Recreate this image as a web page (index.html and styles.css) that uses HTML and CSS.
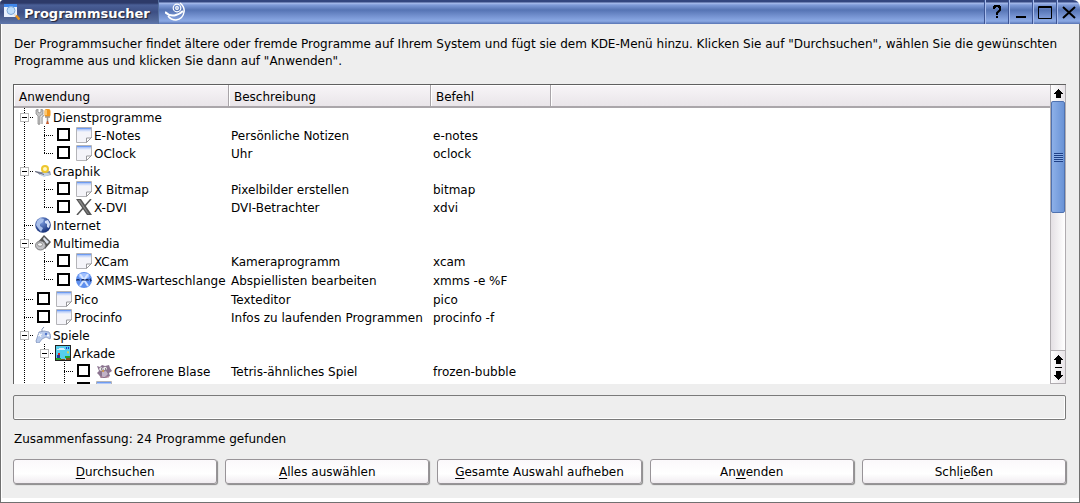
FILE: index.html
```html
<!DOCTYPE html>
<html lang="de">
<head>
    <meta charset="UTF-8">
    <title>Programmsucher</title>
    <link rel="stylesheet" href="styles.css">
</head>
<body>
    <!-- shared icons -->
    <svg class="sprites" aria-hidden="true">
        <defs>
            <linearGradient id="gDoc" x1="0" y1="0" x2="0" y2="1">
                <stop offset="0" stop-color="#4d86f0"/>
                <stop offset=".4" stop-color="#b9cdf8"/>
                <stop offset="1" stop-color="#f4f5fb"/>
            </linearGradient>
            <radialGradient id="gGlobe" cx=".4" cy=".3" r=".7">
                <stop offset="0" stop-color="#7d9de0"/>
                <stop offset="1" stop-color="#152f78"/>
            </radialGradient>
        </defs>
        <symbol id="doc" viewBox="0 0 16 16">
            <path d="M.5 .5h15v10l-5 5H.5z" fill="#f4f4f9" stroke="#b4b4b8"/>
            <path d="M1 1h14v4H1z" fill="url(#gDoc)"/>
            <path d="M15.5 10.500l-5 5v-4.500h4.500z" fill="#fff" stroke="#98989c"/>
        </symbol>
        <symbol id="tools" viewBox="0 0 16 16">
            <path d="M1 1v4l2 2v8q1 1 2 0V7l3-2V1L6 0v3L4 4 3 3V0z" fill="#c4c4c4" stroke="#808080" stroke-width=".7"/>
            <path d="M7 8v7M7 8l2-2" stroke="#aaa" stroke-width="1.500"/>
            <rect x="9.500" y="0" width="6" height="8" rx="2" fill="#f39a1e"/>
            <path d="M11 1v5" stroke="#ffd68a" stroke-width="1.500"/>
            <path d="M10 8h5M12.500 8v7" stroke="#a49a90" stroke-width="1.500"/>
            <path d="M12 12l-1 3h3l-1-3z" fill="#c65c30"/>
        </symbol>
        <symbol id="graphics" viewBox="0 0 16 16">
            <path d="M0 8l6 1 9-1 1 4-6 1-5-1z" fill="#8793a8"/>
            <path d="M4 11q6-3 12 0l-7 3z" fill="#c3d2e6"/>
            <circle cx="10" cy="6" r="4" fill="#edc62e"/>
            <circle cx="10" cy="6" r="2" fill="#fff8c0"/>
            <path d="M0 8.500l9 3" stroke="#667" stroke-width="1"/>
        </symbol>
        <symbol id="xdvi" viewBox="0 0 16 16">
            <path d="M0 0h5l11 16h-5z" fill="#555"/>
            <path d="M15 0L1 16" stroke="#555" stroke-width="1.500"/>
            <path d="M2 1h2l9 14h-1z" fill="#888"/>
        </symbol>
        <symbol id="globe" viewBox="0 0 16 16">
            <circle cx="8" cy="8" r="7.800" fill="url(#gGlobe)"/>
            <path d="M2 4l3-3 4 1-1 3-3 2v2l3 2-2 4-3-4-2-3z" fill="#a9bfea"/>
            <path d="M10 4l3-1 2 4-1 4-2-1v-3l-2-1z" fill="#d5e0f8"/>
        </symbol>
        <symbol id="media" viewBox="0 0 16 16">
            <path d="M9 0l7 7-6 7-7-7z" fill="#555"/>
            <path d="M9 2l5 5-2 2-4-5z" fill="#dde3ee"/>
            <path d="M6 6l5 5-1 1-5-5z" fill="#c8ccd8"/>
            <ellipse cx="5.500" cy="10.500" rx="5" ry="4.500" fill="#c4c4c8" stroke="#666" stroke-width=".8"/>
            <ellipse cx="5" cy="9.500" rx="2.500" ry="1.800" fill="#f4f4f4" stroke="#777" stroke-width=".7"/>
        </symbol>
        <symbol id="xmms" viewBox="0 0 16 16">
            <circle cx="8" cy="8" r="8" fill="#5e8fee"/>
            <ellipse cx="8" cy="4" rx="5.500" ry="3" fill="#a0c0ff"/>
            <path d="M4 2l8 12M12 2L4 14" stroke="#d8e6ff" stroke-width="2"/>
            <path d="M1 9V7l1 1 1-1v2M6 9V7l1 1 1-1v2M10 9V7l1 1 1-1v2M15 7h-1v1h1v1h-1" fill="none" stroke="#142c68"/>
        </symbol>
        <symbol id="games" viewBox="0 0 16 16">
            <path d="M7 5Q6 2 9 0" fill="none" stroke="#7d8fb8"/>
            <path d="M4 5l5-1 5 1q3 4 1 7l-4-2-4 2-3 4q-3 1-3-2z" fill="#b9cbec" stroke="#8294bc" stroke-width=".8"/>
            <path d="M3 9l4-2M4 6l2 4" stroke="#fff"/>
            <circle cx="11" cy="7" r="1.200" fill="#4f74c8"/>
            <circle cx="13" cy="8.500" r="1" fill="#fff"/>
        </symbol>
        <symbol id="arcade" viewBox="0 0 16 16">
            <rect x=".5" y=".5" width="15" height="15" fill="#55cfee" stroke="#222"/>
            <path d="M2 4h2V3h5v1h1v1H2z" fill="#d4effa"/>
            <path d="M11 2h1v2h-1zM13 2h1v2h-1z" fill="#1b34d0"/>
            <path d="M13 6l1 1-1 2-1-2z" fill="#ffd820"/>
            <path d="M3 8h2v2H3z" fill="#d22"/>
            <path d="M2 10h3v3H2z" fill="#223a9c"/>
            <path d="M1 13h5v2H1zM10 11h5v2h-5z" fill="#27a32c"/>
            <path d="M6 14h4v1H6zM11 13h4v2h-4z" fill="#8b4c1a"/>
        </symbol>
        <symbol id="bubble" viewBox="0 0 16 16">
            <path d="M1 3l3 1 2-2 3 1 4-1 1 3 2 3-3 2 1 3-4 2H5l-2-3-2-2 2-2z" fill="#8b7490"/>
            <path d="M6 9l4-1 2 3-3 3H6z" fill="#c2b2c6"/>
            <circle cx="5" cy="6" r="1.800" fill="#eee"/>
            <circle cx="9" cy="5.500" r="1.800" fill="#eee"/>
            <path d="M5 6h1M9 6h1" stroke="#222"/>
            <path d="M5 8l3-1v2z" fill="#e5a53b"/>
            <path d="M4 14h3M9 14h4" stroke="#b88b9c"/>
        </symbol>
        <symbol id="arrowUp" viewBox="0 0 9 9">
            <path d="M4 0h1v1h1v1h1v1h1v1h1v1H7v4H2V5H0V4h1V3h1V2h1V1h1z"/>
        </symbol>
    </svg>

    <div class="window">
        <header class="titlebar">
            <h1 class="caption">
                <svg class="app-icon" viewBox="0 0 16 16" aria-hidden="true">
                    <path d="M0 0h13v13H0z" fill="#e9f1fd"/>
                    <path d="M0 0h13v3H0z" fill="#3f86ea"/>
                    <circle cx="7" cy="6.500" r="4" fill="#bcdcfa" stroke="#7ba6d6"/>
                    <path d="M10 10l2 2" stroke="#ddd" stroke-width="2"/>
                    <path d="M12 11.500l3.500 4" stroke="#e8921c" stroke-width="2.500"/>
                </svg>
                Programmsucher
            </h1>
            <div class="title-fill">
                <svg class="swirl" viewBox="0 0 20 20" aria-hidden="true">
                    <g fill="none" stroke="#fff">
                        <circle cx="12" cy="6" r="3.800" stroke-width="1.200"/>
                        <circle cx="12" cy="6" r="1.300" stroke-width="1.200"/>
                        <path d="M0 10q5 5 11 3 4-1 7-4" stroke-width="2"/>
                        <path d="M15 1q5 4 4 9-1 7-8 8-5 0-8-4" stroke-width="1.500"/>
                    </g>
                </svg>
            </div>
            <button type="button" class="win-btn" aria-label="Hilfe">
                <svg viewBox="0 0 14 14"><path d="M4 4V2h1V1h4v1h1v3L7 8v2M7 11v2" fill="none" stroke="#000" stroke-width="2"/></svg>
            </button>
            <button type="button" class="win-btn" aria-label="Minimieren">
                <svg viewBox="0 0 14 14"><path d="M2 12h10" stroke="#000" stroke-width="2"/></svg>
            </button>
            <button type="button" class="win-btn" aria-label="Maximieren">
                <svg viewBox="0 0 14 14"><path d="M.5 1.500h13v12H.5zM1 2.500h12" fill="none" stroke="#000" stroke-width="1"/></svg>
            </button>
            <button type="button" class="win-btn" aria-label="Fenster schließen">
                <svg viewBox="0 0 14 14"><path d="M1 2l12 11M13 2L1 13" stroke="#000" stroke-width="2"/></svg>
            </button>
        </header>

        <main class="content">
            <p class="intro">Der Programmsucher findet ältere oder fremde Programme auf Ihrem System und fügt sie dem KDE-Menü hinzu. Klicken Sie auf "Durchsuchen", wählen Sie die gewünschten Programme aus und klicken Sie dann auf "Anwenden".</p>

            <div class="list">
                <div class="list-view">
                    <table class="tree">
                        <colgroup>
                            <col class="col-app">
                            <col class="col-desc">
                            <col class="col-cmd">
                            <col>
                        </colgroup>
                        <thead>
                            <tr><th>Anwendung</th><th>Beschreibung</th><th>Befehl</th><th></th></tr>
                        </thead>
                        <tbody>
                            <tr>
                                <td><div class="node"><span class="guide tee"><button type="button" class="toggle" aria-label="Dienstprogramme einklappen"></button></span><svg class="icon"><use href="#tools"/></svg>Dienstprogramme</div></td>
                                <td></td><td></td><td></td>
                            </tr>
                            <tr>
                                <td><div class="node"><span class="guide line"></span><span class="guide tee"></span><label class="item"><input type="checkbox"><svg class="icon"><use href="#doc"/></svg>E-Notes</label></div></td>
                                <td>Persönliche Notizen</td><td>e-notes</td><td></td>
                            </tr>
                            <tr>
                                <td><div class="node"><span class="guide line"></span><span class="guide end"></span><label class="item"><input type="checkbox"><svg class="icon"><use href="#doc"/></svg>OClock</label></div></td>
                                <td>Uhr</td><td>oclock</td><td></td>
                            </tr>
                            <tr>
                                <td><div class="node"><span class="guide tee"><button type="button" class="toggle" aria-label="Graphik einklappen"></button></span><svg class="icon"><use href="#graphics"/></svg>Graphik</div></td>
                                <td></td><td></td><td></td>
                            </tr>
                            <tr>
                                <td><div class="node"><span class="guide line"></span><span class="guide tee"></span><label class="item"><input type="checkbox"><svg class="icon"><use href="#doc"/></svg>X Bitmap</label></div></td>
                                <td>Pixelbilder erstellen</td><td>bitmap</td><td></td>
                            </tr>
                            <tr>
                                <td><div class="node"><span class="guide line"></span><span class="guide end"></span><label class="item"><input type="checkbox"><svg class="icon"><use href="#xdvi"/></svg>X-DVI</label></div></td>
                                <td>DVI-Betrachter</td><td>xdvi</td><td></td>
                            </tr>
                            <tr>
                                <td><div class="node"><span class="guide tee"></span><svg class="icon"><use href="#globe"/></svg>Internet</div></td>
                                <td></td><td></td><td></td>
                            </tr>
                            <tr>
                                <td><div class="node"><span class="guide tee"><button type="button" class="toggle" aria-label="Multimedia einklappen"></button></span><svg class="icon"><use href="#media"/></svg>Multimedia</div></td>
                                <td></td><td></td><td></td>
                            </tr>
                            <tr>
                                <td><div class="node"><span class="guide line"></span><span class="guide tee"></span><label class="item"><input type="checkbox"><svg class="icon"><use href="#doc"/></svg>XCam</label></div></td>
                                <td>Kameraprogramm</td><td>xcam</td><td></td>
                            </tr>
                            <tr class="tall">
                                <td><div class="node"><span class="guide line"></span><span class="guide end"></span><label class="item"><input type="checkbox"><svg class="icon"><use href="#xmms"/></svg>XMMS-Warteschlange</label></div></td>
                                <td>Abspiellisten bearbeiten</td><td>xmms -e %F</td><td></td>
                            </tr>
                            <tr>
                                <td><div class="node"><span class="guide tee"></span><label class="item"><input type="checkbox"><svg class="icon"><use href="#doc"/></svg>Pico</label></div></td>
                                <td>Texteditor</td><td>pico</td><td></td>
                            </tr>
                            <tr>
                                <td><div class="node"><span class="guide tee"></span><label class="item"><input type="checkbox"><svg class="icon"><use href="#doc"/></svg>Procinfo</label></div></td>
                                <td>Infos zu laufenden Programmen</td><td>procinfo -f</td><td></td>
                            </tr>
                            <tr>
                                <td><div class="node"><span class="guide tee"><button type="button" class="toggle" aria-label="Spiele einklappen"></button></span><svg class="icon"><use href="#games"/></svg>Spiele</div></td>
                                <td></td><td></td><td></td>
                            </tr>
                            <tr>
                                <td><div class="node"><span class="guide line"></span><span class="guide tee"><button type="button" class="toggle" aria-label="Arkade einklappen"></button></span><svg class="icon"><use href="#arcade"/></svg>Arkade</div></td>
                                <td></td><td></td><td></td>
                            </tr>
                            <tr>
                                <td><div class="node"><span class="guide line"></span><span class="guide line"></span><span class="guide tee"></span><label class="item"><input type="checkbox"><svg class="icon"><use href="#bubble"/></svg>Gefrorene Blase</label></div></td>
                                <td>Tetris-ähnliches Spiel</td><td>frozen-bubble</td><td></td>
                            </tr>
                            <tr>
                                <td><div class="node"><span class="guide line"></span><span class="guide line"></span><span class="guide tee"></span><label class="item"><input type="checkbox" aria-label="Spiel"><svg class="icon"><use href="#doc"/></svg></label></div></td>
                                <td></td><td></td><td></td>
                            </tr>
                        </tbody>
                    </table>
                </div>
                <div class="scrollbar">
                    <button type="button" class="scroll-btn" aria-label="Nach oben"><svg class="arrow"><use href="#arrowUp"/></svg></button>
                    <div class="track">
                        <div class="thumb"><span class="grip"></span></div>
                    </div>
                    <button type="button" class="scroll-btn" aria-label="Seite nach oben"><svg class="arrow"><use href="#arrowUp"/></svg></button>
                    <button type="button" class="scroll-btn last" aria-label="Nach unten"><svg class="arrow down"><use href="#arrowUp"/></svg></button>
                </div>
            </div>

            <div class="progress" role="progressbar" aria-label="Fortschritt"></div>
            <p class="summary">Zusammenfassung: 24 Programme gefunden</p>

            <div class="buttons">
                <button type="button" class="btn"><u>D</u>urchsuchen</button>
                <button type="button" class="btn"><u>A</u>lles auswählen</button>
                <button type="button" class="btn"><u>G</u>esamte Auswahl aufheben</button>
                <button type="button" class="btn">An<u>w</u>enden</button>
                <button type="button" class="btn">Schl<u>i</u>eßen</button>
            </div>
        </main>
    </div>
</body>
</html>
```
FILE: styles.css
```css
* {
    box-sizing: border-box;
}
body {
    margin: 0;
    font-family: "DejaVu Sans", Verdana, sans-serif;
    font-size: 12px;
    color: #000;
    background-color: #fff;
}
button {
    margin: 0;
    padding: 0;
    font: inherit;
    color: inherit;
}
.sprites {
    display: block;
    width: 0;
    height: 0;
}
.window {
    display: flex;
    flex-direction: column;
    height: 100vh;
}

/* title bar */
.titlebar {
    display: flex;
    height: 24px;
    flex-shrink: 0;
    border-radius: 4px 7px 0 0;
    overflow: hidden;
    background: linear-gradient(#33467f 0, #33467f 2px, #a9bdec 3px, #7f9bd8 5px, #5674b4 10px, #7996d4 17px, #8ba9e4 21px, #5874b4 24px);
}
.caption {
    display: flex;
    align-items: center;
    gap: 4px;
    width: 159px;
    margin: 0;
    padding: 2px 0 0 4px;
    font-size: 13px;
    color: #fff;
    text-shadow: 1px 1px 1px #223;
    background: linear-gradient(#2d3a68 0, #2d3a68 3px, #4a5f96 5px, #3d4f84 12px, #506596 19px, #5d75ab 24px);
    border-right: 1px solid #55709f;
}
.app-icon {
    width: 16px;
    height: 16px;
    margin-bottom: 2px;
}
.title-fill {
    flex: 1;
    padding: 2px 6px;
}
.swirl {
    width: 20px;
    height: 20px;
}
.win-btn {
    display: flex;
    align-items: center;
    justify-content: center;
    width: 24px;
    background: none;
    border: none;
    border-left: 1px solid #3c5494;
    box-shadow: inset 1px 0 #a9bdec;
}
.win-btn svg {
    width: 14px;
    height: 14px;
}

.content {
    display: flex;
    flex: 1;
    flex-direction: column;
    min-height: 0;
    padding: 12px 13px 18px 12px;
    background-color: #eee;
    border: 1px solid #707070;
    border-top: none;
    box-shadow: inset 1px 0 #fff, inset 0 -4px #fff;
}
.intro {
    margin: 0 0 14px;
    padding-left: 1px;
    line-height: 17px;
}

/* program list */
.list {
    display: flex;
    flex: 1;
    min-height: 0;
    border-top: 1px solid #606060;
    border-left: 1px solid #606060;
    background-color: #fff;
}
.list-view {
    flex: 1;
    min-width: 0;
    overflow: hidden;
}
.tree {
    width: 100%;
    table-layout: fixed;
    border-collapse: separate;
    border-spacing: 0;
}
.col-app {
    width: 215px;
}
.col-desc {
    width: 202px;
}
.col-cmd {
    width: 120px;
}
.tree th {
    height: 23px;
    padding: 2px 5px 0;
    font-weight: normal;
    text-align: left;
    background: linear-gradient(#f8f5f8, #e9e5e9);
    border-right: 1px solid #a8a4a8;
    border-bottom: 2px solid #aaa6aa;
    box-shadow: inset 1px 1px #fff;
}
.tree th:last-child {
    border-right: none;
}
.tree td {
    height: 18px;
    padding: 2px 2px 0;
    line-height: 16px;
    white-space: nowrap;
}
.tree td:first-child {
    padding: 0;
}
.tree .tall td {
    height: 20px;
}
.node, .item {
    display: flex;
    align-items: flex-start;
    height: 18px;
    line-height: 20px;
}
.tall .node {
    height: 20px;
}
.tall .item {
    padding-top: 1px;
}
.icon {
    width: 16px;
    height: 16px;
    margin: 1px 2px 0 1px;
    flex-shrink: 0;
}
.item input {
    appearance: none;
    width: 13px;
    height: 13px;
    margin: 2px 5px 0 3px;
    border: 2px solid #000;
    background-color: #fff;
}
.item input:checked {
    background-color: #6b93d6;
}
.tall .icon {
    margin-right: 4px;
}

/* dotted branches of the tree */
.guide {
    display: flex;
    align-items: center;
    width: 20px;
    height: 100%;
    padding-left: 6px;
    flex-shrink: 0;
    background-repeat: no-repeat;
}
.line {
    background-image: repeating-linear-gradient(#000 0 1px, transparent 1px 2px);
    background-size: 1px 100%;
    background-position: 10px 0;
}
.tee, .end {
    background-image:
        repeating-linear-gradient(#000 0 1px, transparent 1px 2px),
        repeating-linear-gradient(90deg, #000 0 1px, transparent 1px 2px);
    background-size: 1px 100%, 9px 1px;
    background-position: 10px 0, 10px 9px;
}
.end {
    background-size: 1px 10px, 9px 1px;
}
.toggle {
    width: 9px;
    height: 9px;
    border: 1px solid #b8b8b8;
    background: linear-gradient(#000, #000) center / 5px 1px no-repeat #fff;
}

/* scroll bar */
.scrollbar {
    display: flex;
    flex-direction: column;
    width: 16px;
    border: 1px solid #b0acb0;
    border-top: none;
}
.scroll-btn {
    display: flex;
    align-items: center;
    justify-content: center;
    height: 16px;
    flex-shrink: 0;
    border: none;
    background: linear-gradient(90deg, #fff, #e8e4e8);
}
.arrow {
    width: 9px;
    height: 9px;
}
.down {
    transform: rotate(180deg);
}
.last {
    background: linear-gradient(#000, #000) center top / 7px 1px no-repeat, linear-gradient(90deg, #fff, #e8e4e8);
}
.track {
    flex: 1;
    background: linear-gradient(90deg, #e4e0e4, #fff);
    border-bottom: 1px solid #b0acb0;
}
.thumb {
    display: flex;
    align-items: center;
    justify-content: center;
    height: 45%;
    background: linear-gradient(90deg, #8db0e8, #6a93d6);
    border: 1px solid #4f72b0;
    border-radius: 2px;
}
.grip {
    width: 9px;
    height: 9px;
    background: repeating-linear-gradient(#1e3f86 0 1px, #8db0e8 1px 2px);
}

/* bottom area */
.progress {
    height: 25px;
    margin-top: 11px;
    flex-shrink: 0;
    border: 1px solid #7a7a7a;
    border-radius: 2px;
    box-shadow: inset -1px -1px #fff;
}
.summary {
    margin: 11px 1px;
    line-height: 17px;
}
.buttons {
    display: grid;
    grid-template-columns: repeat(5, 1fr);
    gap: 8px;
}
.btn {
    height: 25px;
    background: linear-gradient(#fbf8fb, #fff 60%, #f0ecf0);
    border: 1px solid #989498;
    border-radius: 3px;
    box-shadow: 1px 1px 1px #888;
}
.btn:active {
    background: #e4e0e4;
}
.btn u {
    text-underline-offset: 2px;
}
```
